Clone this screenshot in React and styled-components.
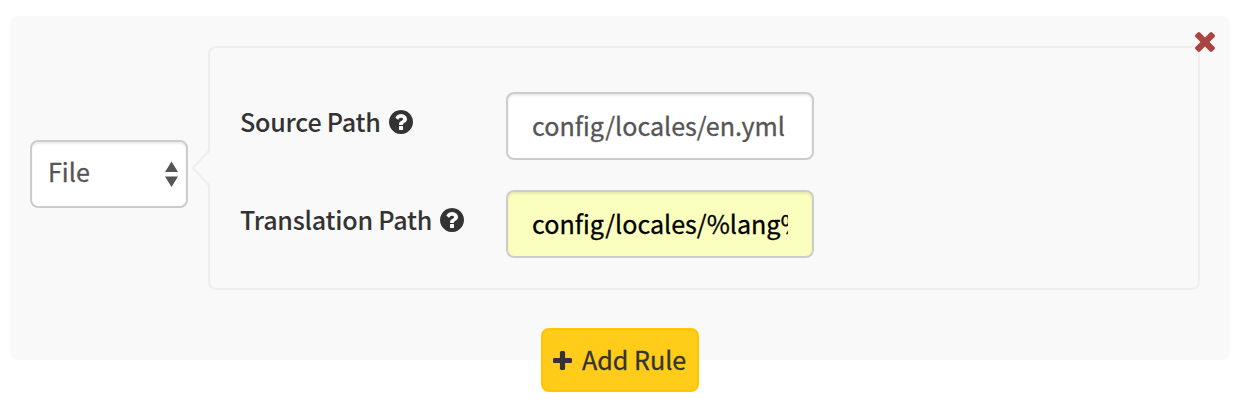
import React from "react";
import styled, { createGlobalStyle } from "styled-components";

const GlobalStyle = createGlobalStyle`
  *, *::before, *::after { box-sizing: border-box; }
  body {
    margin: 0;
    background: #fff;
    color: #333;
    font-family: "Noto Sans CJK SC", "Open Sans", sans-serif;
    font-size: 25.1px;
    line-height: 36px;
    -webkit-text-stroke: 0.3px currentColor;
  }
`;

const Page = styled.main`
  padding: 16px 12px 0 10px;
`;

const RulePanel = styled.section`
  position: relative;
  display: flex;
  align-items: flex-start;
  gap: 20px;
  height: 344px;
  padding: 30px 30px 0 20px;
  border-radius: 8px;
  background: #f9f9f9;
`;

const TypeSelect = styled.div`
  display: flex;
  align-items: center;
  justify-content: space-between;
  flex: none;
  width: 158px;
  height: 68px;
  margin-top: 94px;
  padding: 0 8px 6px 16px;
  border: 2px solid #ccc;
  border-radius: 8px;
  background: #fff;
  box-shadow: inset 0 2px 2px rgba(0, 0, 0, 0.075);
  color: #555;
`;

const Arrows = styled.svg`
  width: 13px;
  height: 26px;
  margin-top: 6px;
  fill: #555;
`;

const Fields = styled.div`
  position: relative;
  display: flex;
  flex-direction: column;
  gap: 30px;
  flex: 1;
  height: 244px;
  padding: 44px 30px 0;
  border: 2px solid #eee;
  border-radius: 8px;
`;

const Pointer = styled.svg`
  position: absolute;
  left: -19px;
  top: 102px;
  width: 20px;
  height: 36px;
`;

const Field = styled.div`
  display: flex;
  align-items: flex-start;
`;

const Label = styled.label`
  display: flex;
  align-items: center;
  gap: 8px;
  width: 266px;
  padding-top: 11px;
  font-weight: 500;
  letter-spacing: -0.23px;
  white-space: nowrap;
  -webkit-text-stroke: 0;

  svg {
    margin-top: 2px;
  }
`;

const Input = styled.input`
  width: 308px;
  height: 68px;
  padding: 0 24px 2px;
  border: 2px solid #ccc;
  border-radius: 8px;
  outline: none;
  background: ${(p) => (p.$filled ? "#faffbd" : "#fff")};
  box-shadow: inset 0 2px 2px rgba(0, 0, 0, 0.075);
  color: ${(p) => (p.$filled ? "#000" : "#555")};
  font: inherit;
`;

const Icon = styled.svg`
  display: block;
  flex: none;
  width: ${(p) => p.$size}px;
  height: ${(p) => p.$size}px;
  fill: currentColor;
`;

const RemoveButton = styled.button`
  position: absolute;
  top: 16.3px;
  right: 15px;
  padding: 0;
  border: 0;
  background: none;
  color: #a94442;
`;

const Actions = styled.div`
  position: relative;
  display: flex;
  justify-content: center;
  margin-top: -32px;
`;

const AddButton = styled.button`
  display: flex;
  align-items: center;
  gap: 10px;
  width: 158px;
  height: 64px;
  padding: 0 0 0 10px;
  border: 2px solid #ffc600;
  border-radius: 8px;
  background: #ffcc1a;
  color: #333;
  font: inherit;
  white-space: nowrap;

  span {
    padding-bottom: 2px;
  }
`;

const HelpIcon = () => (
  <Icon $size={24} viewBox="128 128 1536 1536" aria-hidden="true">
    <path d="M1024 1376v-192q0-14-9-23t-23-9h-192q-14 0-23 9t-9 23v192q0 14 9 23t23 9h192q14 0 23-9t9-23zm256-672q0-88-55.5-163t-138.500-116-170-41q-243 0-371 213-15 24 8 42l132 100q7 6 19 6 16 0 25-12 53-68 86-92 34-24 86-24 48 0 85.500 26t37.500 59q0 38-20 61t-68 45q-63 28-115.500 86.500t-52.500 125.500v36q0 14 9 23t23 9h192q14 0 23-9t9-23q0-19 21.500-49.500t54.500-49.500q32-18 49-28.500t46-35 44.500-48 28-60.500 12.500-81zm384 192q0 209-103 385.500t-279.500 279.500-385.500 103-385.500-103-279.500-279.500-103-385.500 103-385.500 279.500-279.500 385.500-103 385.500 103 279.500 279.500 103 385.500z" />
  </Icon>
);

const PathField = ({ label, value, filled }) => (
  <Field>
    <Label>
      <span>{label}</span>
      <HelpIcon />
    </Label>
    <Input defaultValue={value} $filled={filled} aria-label={label} spellCheck={false} />
  </Field>
);

export default function App() {
  return (
    <Page>
      <GlobalStyle />
      <RulePanel>
        <TypeSelect>
          <span>File</span>
          <Arrows viewBox="0 0 13 26" aria-hidden="true">
            <path d="M6.500 0.500L13 11H0ZM0 15.500H13L6.500 26Z" />
          </Arrows>
        </TypeSelect>
        <Fields>
          <Pointer viewBox="0 0 20 36" aria-hidden="true">
            <path d="M17 1H20V35H17Z" fill="#f9f9f9" />
            <path d="M18 0V1L1.500 18L18 35V36" fill="none" stroke="#eee" strokeWidth="2" />
          </Pointer>
          <PathField label="Source Path" value="config/locales/en.yml" />
          <PathField label="Translation Path" value="config/locales/%lang%.yml" filled />
        </Fields>
        <RemoveButton aria-label="Remove rule">
          <Icon $size={20} viewBox="302 366 1188 1188" aria-hidden="true">
            <path d="M1490 1322q0 40-28 68l-136 136q-28 28-68 28t-68-28l-294-294-294 294q-28 28-68 28t-68-28l-136-136q-28-28-28-68t28-68l294-294-294-294q-28-28-28-68t28-68l136-136q28-28 68-28t68 28l294 294 294-294q28-28 68-28t68 28l136 136q28 28 28 68t-28 68l-294 294 294 294q28 28 28 68z" />
          </Icon>
        </RemoveButton>
      </RulePanel>
      <Actions>
        <AddButton>
          <Icon $size={19} viewBox="192 128 1408 1408" aria-hidden="true">
            <path d="M1600 736v192q0 40-28 68t-68 28h-416v416q0 40-28 68t-68 28h-192q-40 0-68-28t-28-68v-416h-416q-40 0-68-28t-28-68v-192q0-40 28-68t68-28h416v-416q0-40 28-68t68-28h192q40 0 68 28t28 68v416h416q40 0 68 28t28 68z" />
          </Icon>
          <span>Add Rule</span>
        </AddButton>
      </Actions>
    </Page>
  );
}
